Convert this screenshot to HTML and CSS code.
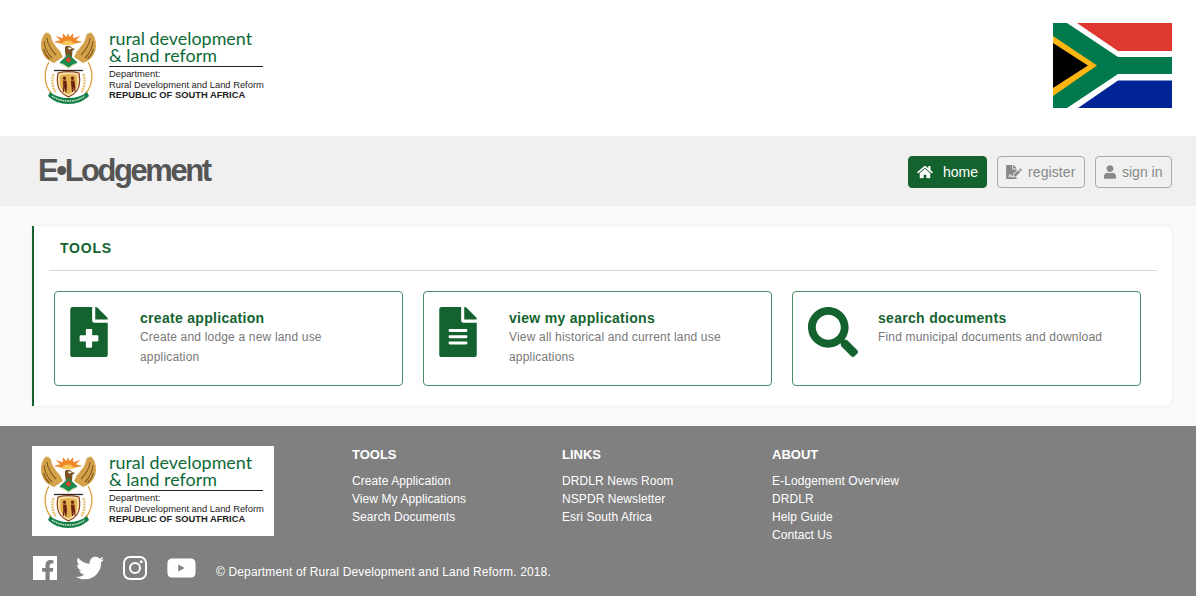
FILE: index.html
```html
<!DOCTYPE html>
<html lang="en">
<head>
<meta charset="utf-8">
<title>E-Lodgement</title>
<link rel="stylesheet" href="styles.css">
</head>
<body>
<svg class="defs" width="0" height="0" aria-hidden="true">
  <defs>
    <symbol id="crest" viewBox="0 0 55 73">
      <path fill="#f0892a" d="M27 13 12.500 10 19 8.300 15 4 21.500 6.200 22 1.500 25.500 5 27 1 28.500 5 32 1.500 32.500 6.200 39 4 35 8.300 41.500 10Z"/>
      <path fill="#fcc75a" d="M21 13a6 4.500 0 0 1 12 0Z"/>
      <path fill="#d3a24a" d="M5 .5C1 4-.4 10 .1 15.500.6 20 3 25 7 28l6 3 9-6-3-6C15 15 10.500 9 10 4 9.500 2 7.500.8 5 .5Z"/>
      <path fill="none" stroke="#85581f" stroke-width="1.100" d="M3 9c.5 6 3 12 8 17M6 6c.5 6 4 12 9 17M2.500 17c1 4 3 7 6 10"/>
      <path fill="#d3a24a" d="M50 .5c4 3.500 5.400 9.500 4.900 15-.5 4.500-2.900 9.500-6.900 12.500l-6 3-9-6 3-6c4-4 8.500-10 9-15 .5-2 2.500-3.200 5-3.500Z"/>
      <path fill="none" stroke="#85581f" stroke-width="1.100" d="M52 9c-.5 6-3 12-8 17M49 6c-.5 6-4 12-9 17M52.500 17c-1 4-3 7-6 10"/>
      <path fill="#7a5122" d="M24 15c2-2 6-1.500 7 1l3 1-2.500 1.500L31 25h-6l-1-5Z"/>
      <path fill="#fff" d="M27 15.500h3l.5 1.500-3 .5Z"/>
      <path fill="#1a8a4d" d="m27.500 22 9 8.500-9 6-9-6Z"/>
      <path fill="#e33b2e" d="m27.500 24.500 3 3.500-3 2.500-3-2.500Z"/>
      <path fill="#f4e7b6" d="m21 31 6.500 4.500L34 31l-1 2.500-5.500 3.500-5.500-3.500Z"/>
      <path fill="none" stroke="#2a2a2a" stroke-width="1.300" d="M13 38.500h29"/>
      <path fill="none" stroke="#d9a441" stroke-width="1.400" d="M8 30C2 40 3 54 11 62M47 30c6 10 5 24-3 32"/>
      <path fill="none" stroke="#e5c67a" stroke-width="2.600" stroke-dasharray="2 .8" d="M12.500 42c-2 7-1 13 2 18M42.500 42c2 7 1 13-2 18"/>
      <path fill="#f5e3ae" stroke="#8c3d1c" stroke-width="1.200" d="M17 41c6-1.500 15-1.500 21 0 1 5 1 9 0 13-1 5-6 9-10.500 11C23 63 18 59 17 54c-1-4-1-8 0-13Z"/>
      <path fill="#e2b04e" d="M19.500 43c4-1 12-1 16 0 .7 4 .7 7 0 11-.8 4-5 6.500-8 8.500-3-2-7.200-4.500-8-8.500-.7-4-.7-7 0-11Z"/>
      <path fill="#6e2413" d="M23.500 44.500a1.700 1.700 0 1 1 0 3.400 1.700 1.700 0 0 1 0-3.400Zm8 0a1.700 1.700 0 1 1 0 3.400 1.700 1.700 0 0 1 0-3.400ZM22 48.500h3.400l.7 6-.8 6h-1.100l-.7-5-.8 5-1-1 .6-5Zm8 0h3.400l.7 5.500.6 5-1 1-.8-5-.7 5h-1.100l-.8-6Z"/>
      <path fill="#16804a" d="M9 60c5 4 11 6 18.500 6S41 64 46 60l2 4c-5 5-12 8-20.500 8S12 69 7 64Z"/>
      <path fill="none" stroke="#e9f3ea" stroke-width="1.300" stroke-dasharray="1.500 .8" d="M11 64c5 3.500 10 5 16.500 5S39 67.500 44 64"/>
    </symbol>
    <symbol id="social-facebook" viewBox="0 32 448 448">
      <path d="M0 32H448V480H311V328h58l11-72H311V212c0-20 10-39 40-39h31V112s-28-5-55-5c-57 0-94 34-94 96v53H170v72h63V480H0Z"/>
    </symbol>
  </defs>
</svg>

<header class="top">
  <div class="logo">
    <svg class="crest" aria-hidden="true"><use href="#crest"/></svg>
    <div class="logo-text">
      <div class="logo-name">rural development<br>&amp; land reform</div>
      <div class="logo-dept">Department:<br>Rural Development and Land Reform<br><b>REPUBLIC OF SOUTH AFRICA</b></div>
    </div>
  </div>
  <svg class="flag" viewBox="0 0 119 85" aria-label="South African flag">
    <rect width="119" height="85" fill="#fff"/>
    <path fill="#de3831" d="M24 0H119V28H65Z"/>
    <path fill="#002395" d="M25 85H119V57.500H65Z"/>
    <path fill="#007a4d" d="M0 0H14L65 34H119V51H65L14 85H0Z"/>
    <path fill="#ffb612" d="M0 13 44 42.500 0 73Z"/>
    <path fill="#000" d="M0 20 35 42.500 0 65Z"/>
  </svg>
</header>

<nav class="bar">
  <div class="brand">E•Lodgement</div>
  <div class="nav-buttons">
    <a class="btn btn-on">
      <svg class="ico-home" viewBox="0 0 576 512"><path d="M280.37 148.26L96 300.11V464a16 16 0 0 0 16 16l112.06-.29a16 16 0 0 0 15.92-16V368a16 16 0 0 1 16-16h64a16 16 0 0 1 16 16v95.64a16 16 0 0 0 16 16.05L464 480a16 16 0 0 0 16-16V300L295.67 148.26a12.19 12.19 0 0 0-15.3 0zM571.6 251.47L488 182.56V44.05a12 12 0 0 0-12-12h-56a12 12 0 0 0-12 12v72.61L318.47 43a48 48 0 0 0-61 0L4.34 251.47a12 12 0 0 0-1.6 16.9l25.5 31A12 12 0 0 0 45.15 301l235.22-193.74a12.19 12.19 0 0 1 15.3 0L530.9 301a12 12 0 0 0 16.9-1.6l25.5-31a12 12 0 0 0-1.7-16.93z"/></svg>
      home
    </a>
    <a class="btn btn-register">
      <svg class="ico-reg" viewBox="0 0 576 512"><path d="M218.17 424.14c-2.95-5.92-8.09-6.52-10.17-6.52s-7.22.59-10.02 6.19l-7.67 15.34c-6.37 12.78-25.03 11.37-29.48-2.09L144 386.59l-10.61 31.88c-5.89 17.66-22.38 29.53-41 29.53H80c-8.84 0-16-7.16-16-16s7.16-16 16-16h12.39c4.83 0 9.11-3.08 10.64-7.66l18.19-54.64c3.3-9.81 12.44-16.41 22.78-16.41s19.48 6.59 22.77 16.41l13.88 41.64c19.75-16.19 54.06-9.7 66 14.16 1.89 3.78 5.49 5.95 9.36 6.26v-82.12l128-127.09V160H248c-13.2 0-24-10.8-24-24V0H24C10.7 0 0 10.7 0 24v464c0 13.3 10.7 24 24 24h336c13.3 0 24-10.7 24-24v-40l-128-.11c-16.12-.31-30.58-9.28-37.83-23.75zM384 121.9c0-6.3-2.5-12.4-7-16.9L279.1 7c-4.5-4.5-10.6-7-17-7H256v128h128v-6.1zm-96 225.06V416h68.99l161.68-162.78-67.88-67.88L288 346.96zm280.54-179.63l-31.87-31.87c-9.94-9.94-26.07-9.94-36.01 0l-27.25 27.25 67.88 67.88 27.25-27.25c9.95-9.94 9.95-26.07 0-36.01z"/></svg>
      register
    </a>
    <a class="btn btn-signin">
      <svg class="ico-user" viewBox="0 0 448 512"><path d="M224 256c70.7 0 128-57.3 128-128S294.7 0 224 0 96 57.3 96 128s57.3 128 128 128zm89.6 32h-16.7c-22.2 10.2-46.9 16-72.9 16s-50.6-5.800-72.900-16h-16.700C60.200 288 0 348.200 0 422.400V464c0 26.500 21.500 48 48 48h352c26.500 0 48-21.500 48-48v-41.600c0-74.200-60.200-134.400-134.400-134.400z"/></svg>
      sign in
    </a>
  </div>
</nav>

<main class="main">
  <section class="panel">
    <h2 class="panel-title">TOOLS</h2>
    <div class="tools">
      <a class="tool">
        <svg class="tool-ico tool-file" viewBox="0 0 384 512"><path d="M377 105L279.100 7c-4.500-4.500-10.600-7-17-7H256v128h128v-6.100c0-6.300-2.500-12.400-7-16.900zm-153 31V0H24C10.700 0 0 10.700 0 24v464c0 13.300 10.700 24 24 24h336c13.300 0 24-10.700 24-24V160H248c-13.200 0-24-10.800-24-24zm64 160v48c0 4.400-3.600 8-8 8h-56v56c0 4.400-3.600 8-8 8h-48c-4.400 0-8-3.600-8-8v-56h-56c-4.400 0-8-3.600-8-8v-48c0-4.400 3.600-8 8-8h56v-56c0-4.400 3.600-8 8-8h48c4.400 0 8 3.600 8 8v56h56c4.400 0 8 3.600 8 8z"/></svg>
        <div class="tool-text">
          <h3>create application</h3>
          <p>Create and lodge a new land use application</p>
        </div>
      </a>
      <a class="tool">
        <svg class="tool-ico tool-file" viewBox="0 0 384 512"><path d="M224 136V0H24C10.700 0 0 10.700 0 24v464c0 13.300 10.700 24 24 24h336c13.300 0 24-10.700 24-24V160H248c-13.200 0-24-10.800-24-24zm64 236c0 6.600-5.400 12-12 12H108c-6.600 0-12-5.400-12-12v-8c0-6.600 5.400-12 12-12h168c6.600 0 12 5.400 12 12v8zm0-64c0 6.600-5.400 12-12 12H108c-6.600 0-12-5.400-12-12v-8c0-6.600 5.400-12 12-12h168c6.600 0 12 5.400 12 12v8zm0-72v8c0 6.600-5.400 12-12 12H108c-6.600 0-12-5.400-12-12v-8c0-6.600 5.400-12 12-12h168c6.600 0 12 5.400 12 12zm96-114.100v6.100H256V0h6.100c6.400 0 12.500 2.500 17 7l97.900 98c4.500 4.500 7 10.600 7 16.900z"/></svg>
        <div class="tool-text">
          <h3>view my applications</h3>
          <p>View all historical and current land use applications</p>
        </div>
      </a>
      <a class="tool">
        <svg class="tool-ico tool-search" viewBox="0 0 512 512"><path d="M505 442.700L405.300 343c-4.500-4.500-10.600-7-17-7H372c27.600-35.300 44-79.700 44-128C416 93.100 322.900 0 208 0S0 93.100 0 208s93.100 208 208 208c48.300 0 92.700-16.400 128-44v16.300c0 6.400 2.500 12.500 7 17l99.700 99.700c9.400 9.400 24.600 9.400 33.900 0l28.300-28.300c9.400-9.400 9.400-24.600.1-34zM208 336c-70.700 0-128-57.200-128-128 0-70.700 57.200-128 128-128 70.700 0 128 57.200 128 128 0 70.700-57.200 128-128 128z"/></svg>
        <div class="tool-text">
          <h3>search documents</h3>
          <p>Find municipal documents and download</p>
        </div>
      </a>
    </div>
  </section>
</main>

<footer class="footer">
  <div class="footer-top">
    <div class="logo logo-boxed">
      <svg class="crest" aria-hidden="true"><use href="#crest"/></svg>
      <div class="logo-text">
        <div class="logo-name">rural development<br>&amp; land reform</div>
        <div class="logo-dept">Department:<br>Rural Development and Land Reform<br><b>REPUBLIC OF SOUTH AFRICA</b></div>
      </div>
    </div>
    <div class="footer-cols">
      <div class="fcol">
        <h4>TOOLS</h4>
        <a>Create Application</a>
        <a>View My Applications</a>
        <a>Search Documents</a>
      </div>
      <div class="fcol">
        <h4>LINKS</h4>
        <a>DRDLR News Room</a>
        <a>NSPDR Newsletter</a>
        <a>Esri South Africa</a>
      </div>
      <div class="fcol">
        <h4>ABOUT</h4>
        <a>E-Lodgement Overview</a>
        <a>DRDLR</a>
        <a>Help Guide</a>
        <a>Contact Us</a>
      </div>
    </div>
  </div>
  <div class="footer-bottom">
    <svg class="soc soc-fb" aria-label="Facebook"><use href="#social-facebook"/></svg>
    <svg class="soc soc-tw" viewBox="0 0 512 512" aria-label="Twitter"><path d="M459.370 151.716c.325 4.548.325 9.097.325 13.645 0 138.720-105.583 298.558-298.558 298.558-59.452 0-114.680-17.219-161.137-47.106 8.447.974 16.568 1.299 25.340 1.299 49.055 0 94.213-16.568 130.274-44.832-46.132-.975-84.792-31.188-98.112-72.772 6.498.974 12.995 1.624 19.818 1.624 9.421 0 18.843-1.300 27.614-3.573-48.081-9.747-84.143-51.980-84.143-102.985v-1.299c13.969 7.797 30.214 12.670 47.431 13.319-28.264-18.843-46.781-51.005-46.781-87.391 0-19.492 5.197-37.360 14.294-52.954 51.655 63.675 129.300 105.258 216.365 109.807-1.624-7.797-2.599-15.918-2.599-24.040 0-57.828 46.782-104.934 104.934-104.934 30.213 0 57.502 12.670 76.670 33.137 23.715-4.548 46.456-13.320 66.599-25.340-7.798 24.366-24.366 44.833-46.132 57.827 21.117-2.273 41.584-8.122 60.426-16.243-14.292 20.791-32.161 39.308-52.628 54.253z"/></svg>
    <svg class="soc soc-ig" viewBox="0 0 24 24" aria-label="Instagram"><rect class="ig-line" x="1" y="1" width="22" height="22" rx="6"/><circle class="ig-line" cx="12" cy="12" r="5"/><circle cx="18.300" cy="5.700" r="1.500"/></svg>
    <svg class="soc soc-yt" viewBox="0 0 30 21" aria-label="YouTube"><path d="M5 0.500h20c2.800 0 4.500 1.700 4.700 4.500.2 3.700.2 7.300 0 11-.2 2.800-1.900 4.500-4.700 4.500H5C2.200 20.500.5 18.800.3 16c-.2-3.700-.2-7.300 0-11C.5 2.200 2.200.5 5 .5Zm6.500 6.300v7.400l6.800-3.700Z" fill-rule="evenodd"/></svg>
    <span class="copy">© Department of Rural Development and Land Reform. 2018.</span>
  </div>
</footer>
</body>
</html>
```

FILE: styles.css
```css
* { box-sizing: border-box; }
html, body { margin: 0; padding: 0; }
body {
  width: 1196px;
  height: 596px;
  overflow: hidden;
  font-family: "Liberation Sans", Arial, sans-serif;
  background: #f9f9f9;
  color: #333;
}
.defs { display: block; height: 0; }

.top {
  height: 136px;
  background: #fff;
  display: flex;
  justify-content: space-between;
  padding: 23px 24px 0 32px;
}
.logo {
  width: 242px;
  height: 90px;
  padding: 10px 0 0 9px;
  display: flex;
  background: #fff;
}
.top .logo { margin-top: -1px; }
.crest { width: 55px; height: 73px; flex: none; }
.logo-text { margin-left: 13px; width: 154px; }
.logo-name {
  font-family: Lato, "Open Sans", sans-serif;
  font-size: 17.900px;
  line-height: 16.500px;
  color: #0d6a39;
  height: 37px;
  border-bottom: 1px solid #222;
  white-space: nowrap;
  margin-top: -2px;
}
.logo-dept {
  font-size: 9.350px;
  line-height: 10.500px;
  color: #222;
  white-space: nowrap;
  padding-top: 2px;
}
.flag { width: 119px; height: 85px; display: block; }

.bar {
  height: 70px;
  background: #f0f0f0;
  display: flex;
  justify-content: space-between;
  align-items: center;
  padding: 0 24px 0 38px;
}
.brand {
  font-size: 31px;
  font-weight: 700;
  letter-spacing: -2.450px;
  color: #555;
}
.nav-buttons { display: flex; gap: 10px; margin-top: 1px; }
.btn {
  height: 32px;
  display: flex;
  align-items: center;
  font-size: 14px;
  color: #888;
  border: 1px solid #aaa;
  border-radius: 4px;
  white-space: nowrap;
}
.btn svg { fill: currentColor; display: block; }
.btn-on {
  width: 79px;
  background: #14632f;
  border-color: #14632f;
  color: #fff;
  padding-left: 8px;
  gap: 10px;
}
.ico-home { width: 16px; height: 14px; }
.btn-register { width: 88px; padding-left: 8px; gap: 6px; letter-spacing: 0.100px; }
.ico-reg { width: 16px; height: 14px; }
.btn-signin { width: 77px; padding-left: 8px; gap: 6px; }
.ico-user { width: 12px; height: 14px; }

.main { height: 220px; padding: 20px 24px 20px 32px; }
.panel {
  height: 180px;
  background: #fff;
  border-left: 2px solid #14632f;
  border-radius: 0 8px 8px 0;
  box-shadow: 0 0 4px rgba(0, 0, 0, 0.06);
}
.panel-title {
  margin: 0 15px 0 15px;
  height: 45px;
  padding: 14px 0 0 11px;
  font-size: 14px;
  line-height: 16px;
  letter-spacing: 0.800px;
  font-weight: 700;
  color: #14632f;
  border-bottom: 1px solid #d8d8d8;
}
.tools { display: flex; gap: 20px; padding: 20px 0 0 20px; }
.tool {
  width: 349px;
  height: 95px;
  display: flex;
  align-items: flex-start;
  padding: 15px 15px 0 15px;
  border: 1px solid #4a8a65;
  border-radius: 4px;
}
.tool-ico { display: block; fill: #14632f; flex: none; }
.tool-file { width: 38px; height: 50px; margin-right: 32px; }
.tool-search { width: 50px; height: 50px; margin-right: 20px; }
.tool-text { width: 235px; }
.tool-text h3 {
  margin: 3px 0 1px;
  font-size: 14px;
  line-height: 16px;
  font-weight: 700;
  letter-spacing: 0.300px;
  color: #14632f;
}
.tool-text p {
  margin: 0;
  font-size: 12px;
  line-height: 20px;
  letter-spacing: 0.180px;
  color: #777;
}

.footer {
  height: 170px;
  background: #808080;
  color: #fff;
  padding: 20px 32px 0;
}
.footer-top { display: flex; height: 90px; }
.footer-cols { display: flex; margin-left: 78px; }
.fcol { width: 210px; display: flex; flex-direction: column; }
.fcol h4 {
  margin: 1px 0 9px;
  font-size: 13px;
  line-height: 16px;
  font-weight: 700;
  color: #fff;
}
.fcol a {
  font-size: 12px;
  line-height: 18px;
  letter-spacing: 0.080px;
  color: #fff;
  white-space: nowrap;
}
.footer-bottom { display: flex; align-items: center; margin-top: 20px; height: 24px; }
.soc { display: block; fill: #fff; flex: none; }
.soc-fb { width: 24px; height: 24px; margin-left: 1px; }
.soc-tw { width: 28px; height: 28px; margin-left: 19px; }
.soc-ig { width: 24px; height: 24px; margin-left: 19px; }
.ig-line { fill: none; stroke: #fff; stroke-width: 2; }
.soc-yt { width: 29px; height: 20px; margin-left: 20px; }
.copy { font-size: 12px; letter-spacing: 0.140px; margin-left: 20px; margin-top: 7px; }
```
